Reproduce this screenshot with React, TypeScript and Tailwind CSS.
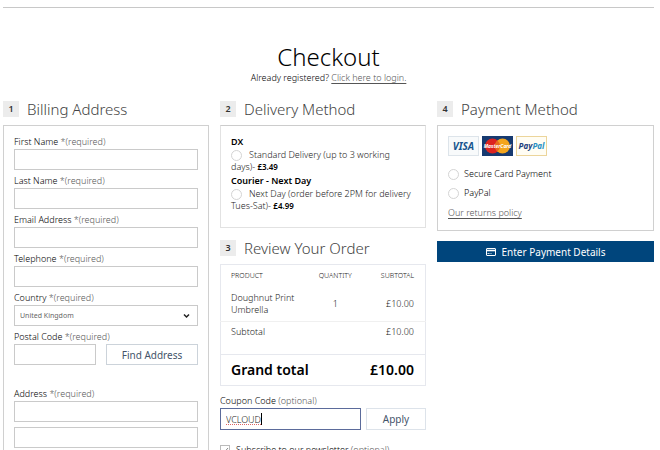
import React from 'react'

const textFields = [
  { id: 'first-name', label: 'First Name' },
  { id: 'last-name', label: 'Last Name' },
  { id: 'email', label: 'Email Address' },
  { id: 'telephone', label: 'Telephone' },
]

function StepHeading({ step, title }: { step: number; title: string }): React.JSX.Element {
  return (
    <div className="flex items-center gap-2 h-4 mb-2">
      <span className="w-4 h-4 bg-[#ececec] text-[9px] leading-4 font-semibold text-center text-[#333]">
        {step}
      </span>
      <h2 className="text-[15px] leading-4 font-light text-[#444] whitespace-nowrap">{title}</h2>
    </div>
  )
}

function Label({ id, children }: { id: string; children: React.ReactNode }): React.JSX.Element {
  return (
    <label htmlFor={id} className="block leading-[14px] text-black">
      {children} <span className="text-[#555]">*(required)</span>
    </label>
  )
}

function Radio({ id, name }: { id: string; name: string }): React.JSX.Element {
  return (
    <input
      type="radio"
      id={id}
      name={name}
      className="appearance-none shrink-0 w-[11px] h-[11px] rounded-full border border-[#d4d4d4] bg-white checked:bg-[#00457c] align-middle"
    />
  )
}

function Billing(): React.JSX.Element {
  return (
    <section>
      <StepHeading step={1} title="Billing Address" />
      <div className="border border-[#d0d0d0] px-[10px] pt-[9px] pb-3">
        {textFields.map((field) => (
          <div key={field.id} className="mb-1">
            <Label id={field.id}>{field.label}</Label>
            <input
              id={field.id}
              type="text"
              className="block w-full h-[21px] px-1 border border-[#cacaca]"
            />
          </div>
        ))}
        <div className="mb-1">
          <Label id="country">Country</Label>
          <div className="relative">
            <select
              id="country"
              className="appearance-none block w-full h-[21px] px-[5px] border border-[#cacaca] text-[7px] font-normal text-[#666] bg-white"
            >
              <option>United Kingdom</option>
            </select>
            <svg
              className="absolute right-2 top-2 w-[7px] h-[6px] pointer-events-none"
              viewBox="0 0 7 6"
              fill="none"
              stroke="#222"
              strokeWidth="1.5"
            >
              <path d="M1 1.5l2.5 2.5L6 1.5" />
            </svg>
          </div>
        </div>
        <Label id="postcode">Postal Code</Label>
        <div className="grid grid-cols-[minmax(0,82fr)_minmax(0,92fr)] gap-[10px] mb-[22px]">
          <input
            id="postcode"
            type="text"
            className="w-full h-[21px] px-1 border border-[#cacaca]"
          />
          <button
            type="button"
            className="h-[21px] border border-[#ccd3da] text-[10px] font-normal text-[#44546a] whitespace-nowrap"
          >
            Find Address
          </button>
        </div>
        <Label id="address">Address</Label>
        <input
          id="address"
          type="text"
          className="block w-full h-[21px] mb-[5px] px-1 border border-[#cacaca]"
        />
        <input
          type="text"
          aria-label="Address line 2"
          className="block w-full h-[21px] px-1 border border-[#cacaca]"
        />
      </div>
    </section>
  )
}

function Delivery(): React.JSX.Element {
  return (
    <section>
      <StepHeading step={2} title="Delivery Method" />
      <div className="border border-[#e2e2e2] border-t-[#ccc] px-[10px] pt-[9px] pb-[15px] mb-3 leading-3 text-[#222]">
        <h3 className="font-semibold leading-[14px] text-black">DX</h3>
        <div>
          <Radio id="dx" name="delivery" />
          <label htmlFor="dx" className="ml-[7px]">
            Standard Delivery (up to 3 working days)-{' '}
            <b className="text-[8px] font-semibold text-black">£3.49</b>
          </label>
        </div>
        <h3 className="font-semibold leading-[14px] mt-px text-black">Courier - Next Day</h3>
        <div>
          <Radio id="courier" name="delivery" />
          <label htmlFor="courier" className="ml-[7px]">
            Next Day (order before 2PM for delivery Tues-Sat)-{' '}
            <b className="text-[8px] font-semibold text-black">£4.99</b>
          </label>
        </div>
      </div>
    </section>
  )
}

function Review(): React.JSX.Element {
  return (
    <section>
      <StepHeading step={3} title="Review Your Order" />
      <table className="w-full table-fixed border border-[#e6e8ee] text-[#222] leading-3 mb-2">
        <thead>
          <tr className="text-[7px] h-[23px]">
            <th className="font-light text-left pl-[10px] w-[42%]">PRODUCT</th>
            <th className="font-light text-center w-[28%]">QUANTITY</th>
            <th className="font-light text-right pr-[11px]">SUBTOTAL</th>
          </tr>
        </thead>
        <tbody>
          <tr className="h-[34px]">
            <td className="pl-[10px]">Doughnut Print Umbrella</td>
            <td className="text-center">1</td>
            <td className="text-right pr-[11px]">£10.00</td>
          </tr>
          <tr className="h-[33px] border-t border-[#f0f0f0]">
            <td className="pl-[10px] pb-3">Subtotal</td>
            <td />
            <td className="text-right pr-[11px] pb-3">£10.00</td>
          </tr>
        </tbody>
        <tfoot>
          <tr className="h-[31px] border-t border-[#e6e8ee] text-sm font-semibold text-black">
            <td colSpan={2} className="pl-[10px]">
              Grand total
            </td>
            <td className="text-right pr-[11px]">£10.00</td>
          </tr>
        </tfoot>
      </table>
      <label htmlFor="coupon" className="block leading-[14px] text-black">
        Coupon Code <span className="text-[#555]">(optional)</span>
      </label>
      <div className="grid grid-cols-[minmax(0,141fr)_minmax(0,60fr)] gap-[5px] mb-[14px]">
        <div className="relative">
          <input
            id="coupon"
            type="text"
            defaultValue="VCLOUD"
            spellCheck={false}
            className="block w-full h-[22px] px-[5px] border border-[#5b6b9b] outline-none text-[#222] underline decoration-dotted decoration-[#d66]"
          />
          <span className="absolute left-[41px] top-[5px] w-px h-3 bg-black" />
        </div>
        <button
          type="button"
          className="h-[22px] border border-[#dde3ea] text-[10px] font-normal text-[#44546a]"
        >
          Apply
        </button>
      </div>
      <div className="flex items-center gap-[6px]">
        <span className="relative flex">
          <input
            id="newsletter"
            type="checkbox"
            defaultChecked
            className="peer appearance-none w-[10px] h-[10px] border border-[#bbb]"
          />
          <svg
            className="absolute left-0 top-0 w-[10px] h-[10px] hidden peer-checked:block pointer-events-none"
            viewBox="0 0 10 10"
            fill="none"
            stroke="#888"
          >
            <path d="M2.5 5l2 2 3.5-4" />
          </svg>
        </span>
        <label htmlFor="newsletter" className="leading-3 text-black whitespace-nowrap">
          Subscribe to our newsletter <span className="text-[#555]">(optional)</span>
        </label>
      </div>
    </section>
  )
}

function CardLogos(): React.JSX.Element {
  return (
    <div className="flex gap-[3px] mb-3">
      <span className="w-[31px] h-5 border border-[#dde4ea] bg-[#f8fafb] text-[10px] leading-[18px] font-bold italic text-center text-[#17558f]">
        VISA
      </span>
      <span className="relative w-[31px] h-5 bg-[#173a70]">
        <svg className="w-[31px] h-5" viewBox="0 0 31 20">
          <circle cx="10.5" cy="10" r="7.5" fill="#dc2420" />
          <circle cx="20.5" cy="10" r="7.5" fill="#f3a51d" />
          <path d="M15.5 4.4a7.5 7.5 0 0 1 0 11.2a7.5 7.5 0 0 1 0-11.2" fill="#e8691f" />
        </svg>
        <span className="absolute inset-0 text-[5px] leading-5 font-bold italic text-center text-white">
          MasterCard
        </span>
      </span>
      <span className="w-[31px] h-5 border border-[#ecd59b] bg-[#fffdf4] text-[8px] leading-[18px] font-bold italic text-center text-[#1d3f7c]">
        Pay<span className="text-[#2790c3]">Pal</span>
      </span>
    </div>
  )
}

function Payment(): React.JSX.Element {
  return (
    <section>
      <StepHeading step={4} title="Payment Method" />
      <div className="border border-[#d0d0d0] px-[10px] pt-[10px] pb-[11px] mb-[10px] text-black">
        <CardLogos />
        <div className="flex items-center gap-[5px] h-3 mb-[7px]">
          <Radio id="card" name="payment" />
          <label htmlFor="card">Secure Card Payment</label>
        </div>
        <div className="flex items-center gap-[5px] h-3 mb-2">
          <Radio id="paypal" name="payment" />
          <label htmlFor="paypal">PayPal</label>
        </div>
        <a href="#returns" className="block w-fit leading-3 text-[#555] underline underline-offset-2">
          Our returns policy
        </a>
      </div>
      <button
        type="button"
        className="flex items-center justify-center gap-[6px] w-full h-[21px] bg-[#00457c] text-[10px] font-normal text-white"
      >
        <svg className="w-[10px] h-2" viewBox="0 0 10 8" fill="none" stroke="#fff">
          <rect x="0.5" y="0.5" width="9" height="7" rx="0.5" />
          <path d="M0 2.5h10" strokeWidth="1.6" />
          <path d="M1.5 5.5h2M4.5 5.5h1" strokeWidth="0.8" />
        </svg>
        Enter Payment Details
      </button>
    </section>
  )
}

function App(): React.JSX.Element {
  return (
    <main className="h-screen overflow-hidden bg-white pl-[3px] pr-[6px] pt-[7px] font-['Noto_Sans',sans-serif] text-[9px] leading-3 font-light">
      <header className="border-t border-[#c8c8c8] pt-[34px] mb-[17px] text-center text-black">
        <h1 className="text-2xl leading-[30px] font-light">Checkout</h1>
        <p className="leading-3">
          Already registered?{' '}
          <a href="#login" className="text-[#555] underline underline-offset-2">
            Click here to login.
          </a>
        </p>
      </header>
      <div className="grid grid-cols-[minmax(0,206fr)_minmax(0,206fr)_minmax(0,217fr)] gap-[11px] items-start">
        <Billing />
        <div>
          <Delivery />
          <Review />
        </div>
        <Payment />
      </div>
    </main>
  )
}

export default App
